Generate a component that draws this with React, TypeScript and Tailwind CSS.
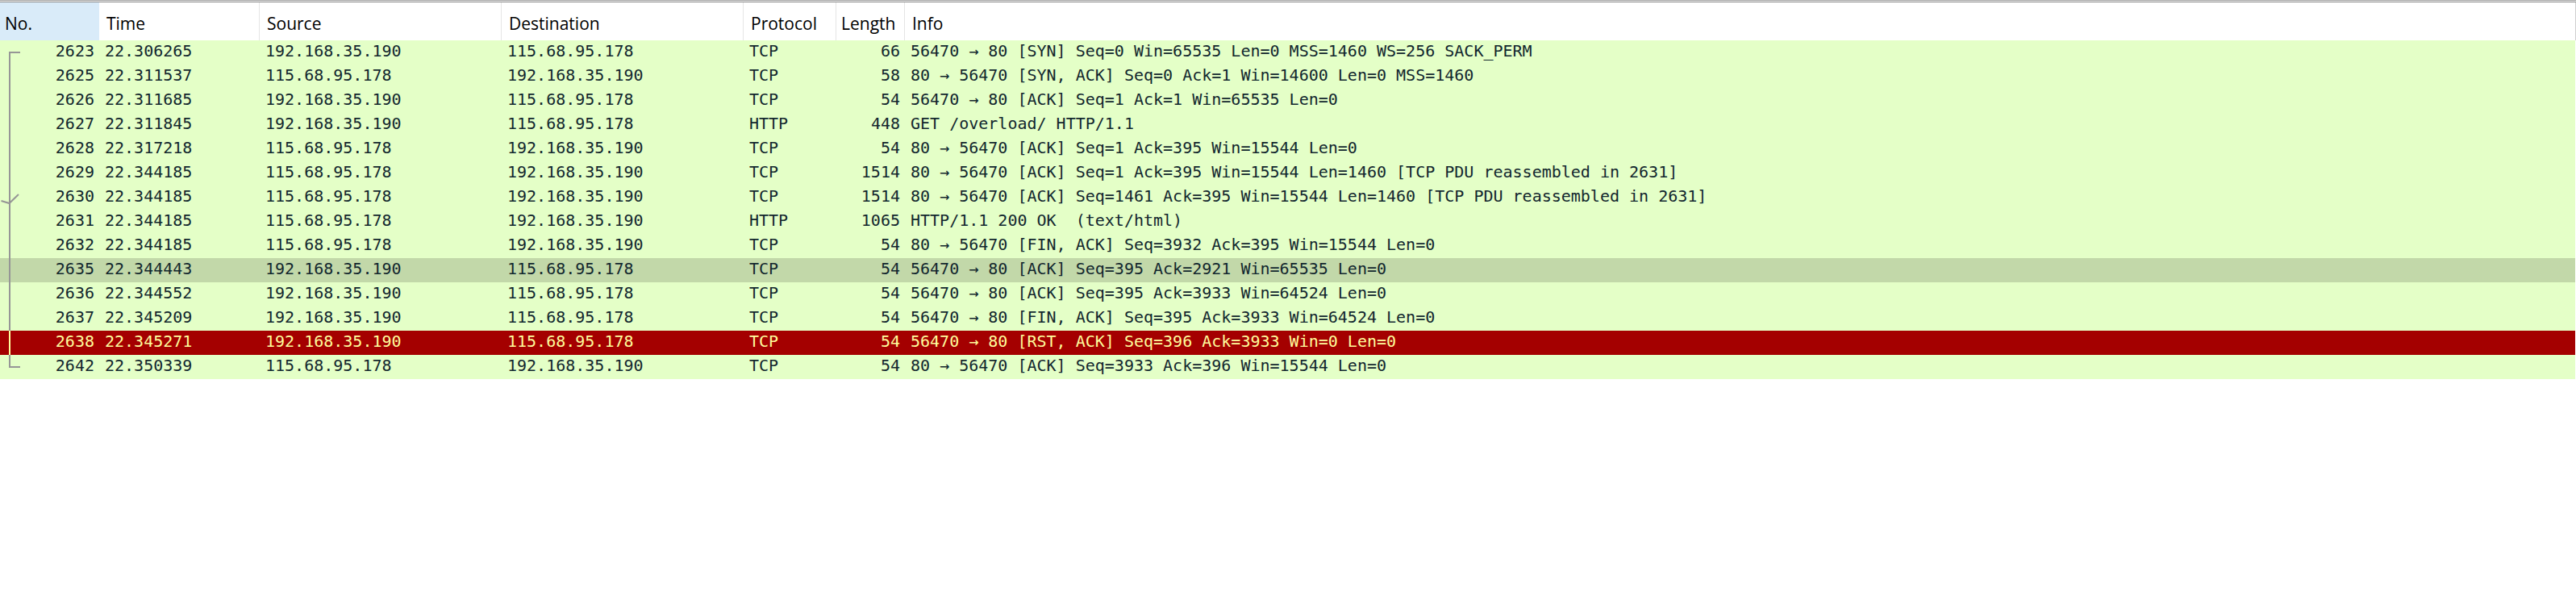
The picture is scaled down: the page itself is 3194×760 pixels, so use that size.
import React from "react";

type Row = {
  no: string;
  time: string;
  src: string;
  dst: string;
  proto: string;
  len: string;
  info: string;
  kind?: "normal" | "dim" | "bad";
};

const rows: Row[] = [
  { no: "2623", time: "22.306265", src: "192.168.35.190", dst: "115.68.95.178", proto: "TCP", len: "66", info: "56470 → 80 [SYN] Seq=0 Win=65535 Len=0 MSS=1460 WS=256 SACK_PERM" },
  { no: "2625", time: "22.311537", src: "115.68.95.178", dst: "192.168.35.190", proto: "TCP", len: "58", info: "80 → 56470 [SYN, ACK] Seq=0 Ack=1 Win=14600 Len=0 MSS=1460" },
  { no: "2626", time: "22.311685", src: "192.168.35.190", dst: "115.68.95.178", proto: "TCP", len: "54", info: "56470 → 80 [ACK] Seq=1 Ack=1 Win=65535 Len=0" },
  { no: "2627", time: "22.311845", src: "192.168.35.190", dst: "115.68.95.178", proto: "HTTP", len: "448", info: "GET /overload/ HTTP/1.1" },
  { no: "2628", time: "22.317218", src: "115.68.95.178", dst: "192.168.35.190", proto: "TCP", len: "54", info: "80 → 56470 [ACK] Seq=1 Ack=395 Win=15544 Len=0" },
  { no: "2629", time: "22.344185", src: "115.68.95.178", dst: "192.168.35.190", proto: "TCP", len: "1514", info: "80 → 56470 [ACK] Seq=1 Ack=395 Win=15544 Len=1460 [TCP PDU reassembled in 2631]" },
  { no: "2630", time: "22.344185", src: "115.68.95.178", dst: "192.168.35.190", proto: "TCP", len: "1514", info: "80 → 56470 [ACK] Seq=1461 Ack=395 Win=15544 Len=1460 [TCP PDU reassembled in 2631]" },
  { no: "2631", time: "22.344185", src: "115.68.95.178", dst: "192.168.35.190", proto: "HTTP", len: "1065", info: "HTTP/1.1 200 OK  (text/html)" },
  { no: "2632", time: "22.344185", src: "115.68.95.178", dst: "192.168.35.190", proto: "TCP", len: "54", info: "80 → 56470 [FIN, ACK] Seq=3932 Ack=395 Win=15544 Len=0" },
  { no: "2635", time: "22.344443", src: "192.168.35.190", dst: "115.68.95.178", proto: "TCP", len: "54", info: "56470 → 80 [ACK] Seq=395 Ack=2921 Win=65535 Len=0", kind: "dim" },
  { no: "2636", time: "22.344552", src: "192.168.35.190", dst: "115.68.95.178", proto: "TCP", len: "54", info: "56470 → 80 [ACK] Seq=395 Ack=3933 Win=64524 Len=0" },
  { no: "2637", time: "22.345209", src: "192.168.35.190", dst: "115.68.95.178", proto: "TCP", len: "54", info: "56470 → 80 [FIN, ACK] Seq=395 Ack=3933 Win=64524 Len=0" },
  { no: "2638", time: "22.345271", src: "192.168.35.190", dst: "115.68.95.178", proto: "TCP", len: "54", info: "56470 → 80 [RST, ACK] Seq=396 Ack=3933 Win=0 Len=0", kind: "bad" },
  { no: "2642", time: "22.350339", src: "115.68.95.178", dst: "192.168.35.190", proto: "TCP", len: "54", info: "80 → 56470 [ACK] Seq=3933 Ack=396 Win=15544 Len=0" },
];

function Tree({ index, total, color }: { index: number; total: number; color: string }) {
  const first = index === 0;
  const last = index === total - 1;
  return (
    <svg className="absolute left-0 top-0" width="30" height="30" viewBox="0 0 30 30">
      <line x1="12" y1={first ? 14 : 0} x2="12" y2={last ? 16 : 30} stroke={color} strokeWidth="2" />
      {(first || last) && <line x1="11" y1="15" x2="25" y2="15" stroke={color} strokeWidth="2" />}
      {index === 6 && (
        <polyline points="1.5,19 11.5,22 23,11" fill="none" stroke={color} strokeWidth="2" />
      )}
    </svg>
  );
}

export default function App() {
  return (
    <div className="w-[3194px] h-[760px] bg-white overflow-hidden" style={{ fontFamily: "'DejaVu Sans Mono', monospace" }}>
      <div className="h-px bg-[#a9a9a9]" />
      <div className="h-px bg-[#eeeeee]" />
      <div className="h-px bg-[#8e8e8e]" />
      <div
        className="flex h-[47px] w-[3194px] text-[21px] text-black leading-[47px]"
        style={{ fontFamily: "'Open Sans', 'Noto Sans', sans-serif" }}
      >
        <div className="w-[123px] shrink-0 bg-[#d9ebf9] pl-[6px] pt-[3px]">No.</div>
        <div className="w-[199px] shrink-0 border-r border-[#e5e5e5] pl-[9px] pt-[3px]">Time</div>
        <div className="w-[300px] shrink-0 border-r border-[#e5e5e5] pl-[9px] pt-[3px]">Source</div>
        <div className="w-[300px] shrink-0 border-r border-[#e5e5e5] pl-[9px] pt-[3px]">Destination</div>
        <div className="w-[115px] shrink-0 border-r border-[#e5e5e5] pl-[9px] pt-[3px]">Protocol</div>
        <div className="w-[85px] shrink-0 border-r border-[#e5e5e5] pl-[6px] pt-[3px]">Length</div>
        <div className="flex-1 border-r border-[#d0d0d0] pl-[9px] pt-[3px]">Info</div>
      </div>
      <div className="w-[3193px]">
        {rows.map((r, i) => {
          const bg = r.kind === "bad" ? "bg-[#a40000]" : r.kind === "dim" ? "bg-[#c2d8a9]" : "bg-[#e4ffc7]";
          const fg = r.kind === "bad" ? "text-[#fffc9c]" : "text-[#12272e]";
          const lineColor = r.kind === "bad" ? "#fffc9c" : "#969696";
          return (
            <div key={r.no} className={`flex h-[30px] text-[20px] leading-[26px] whitespace-pre ${bg} ${fg}`}>
              <div className="relative w-[123px] shrink-0 pr-[6px] text-right">
                <Tree index={i} total={rows.length} color={lineColor} />
                {r.no}
              </div>
              <div className="w-[199px] shrink-0 pl-[7px]">{r.time}</div>
              <div className="w-[300px] shrink-0 pl-[7px]">{r.src}</div>
              <div className="w-[300px] shrink-0 pl-[7px]">{r.dst}</div>
              <div className="w-[115px] shrink-0 pl-[7px]">{r.proto}</div>
              <div className="w-[85px] shrink-0 pr-[6px] text-right">{r.len}</div>
              <div className="flex-1 pl-[7px]">{r.info}</div>
            </div>
          );
        })}
      </div>
    </div>
  );
}
